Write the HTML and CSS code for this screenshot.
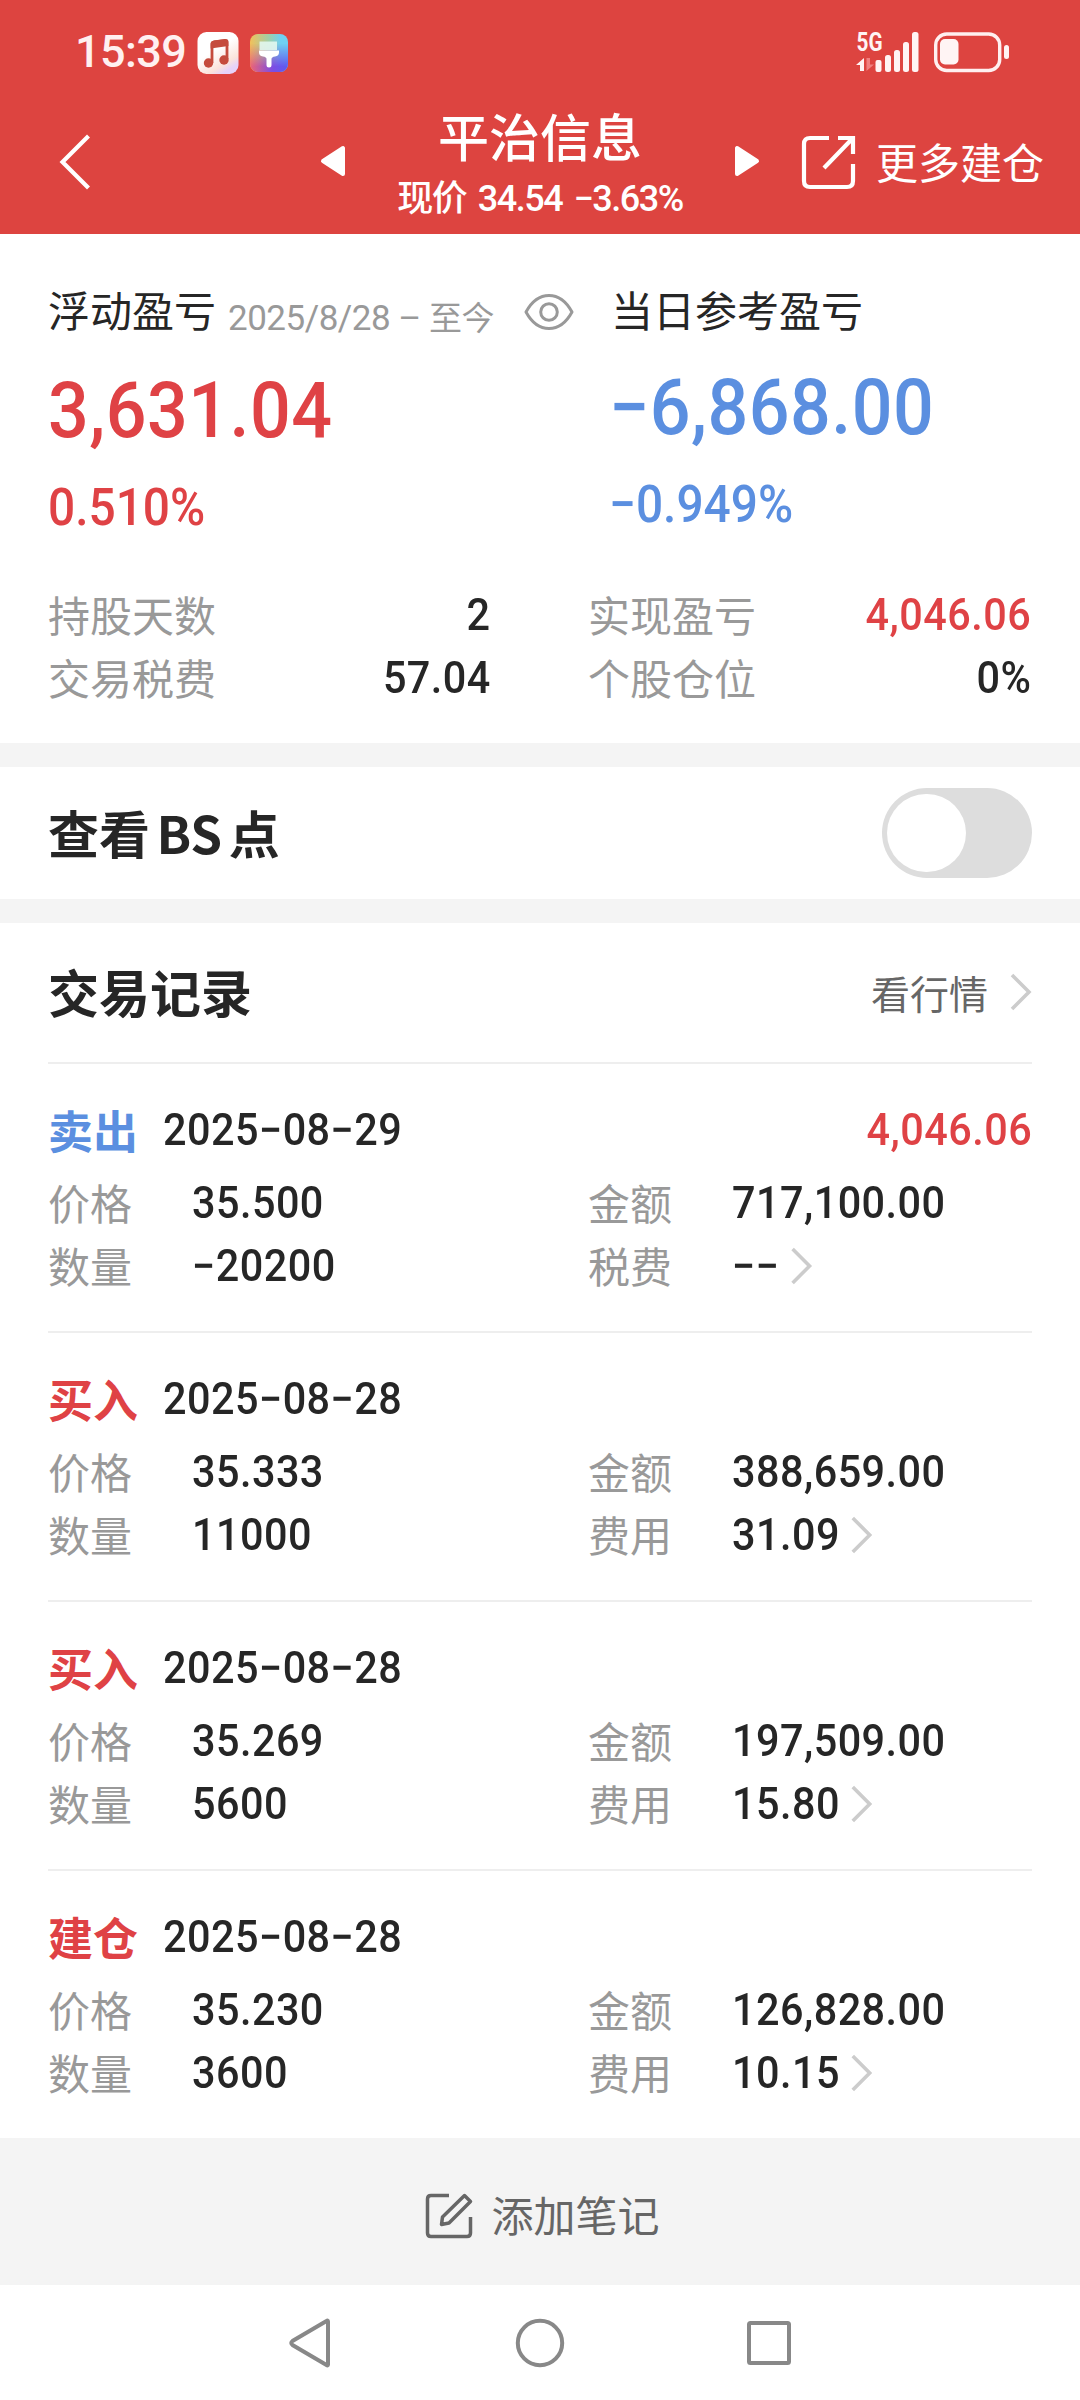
FILE: index.html
```html
<!DOCTYPE html>
<html lang="zh-CN">
<head>
<meta charset="utf-8">
<title>平治信息</title>
<link rel="stylesheet" href="styles.css">
</head>
<body>
<header class="header">
  <div class="status">
    <span class="clock">15:39</span>
    <svg class="app-music" width="42" height="42" viewBox="0 0 42 42">
      <defs><linearGradient id="mg" x1="0" y1="0" x2="0.6" y2="1"><stop offset="0.5" stop-color="#fff"/><stop offset="0.85" stop-color="#fbe3dc"/><stop offset="1" stop-color="#e6d2fa"/></linearGradient></defs>
      <rect x="0.5" width="41" height="42" rx="9" fill="url(#mg)"/>
      <path d="M15 31V12.500Q15 10.500 17 10L28 8.500Q30 8.500 30 10.500V27" fill="none" stroke="#c54b3d" stroke-width="2.800"/>
      <path d="M13.600 11.500Q13.600 9 17 8.500L28 7.200Q31.400 7 31.400 9.500V14L13.600 16.500Z" fill="#c54b3d"/>
      <circle cx="11.500" cy="31" r="4.700" fill="#c54b3d"/><circle cx="27" cy="28" r="4.700" fill="#c54b3d"/>
    </svg>
    <svg class="app-theme" width="38" height="38" viewBox="0 0 38 38">
      <defs>
        <linearGradient id="t1" x1="0" y1="0" x2="1" y2="0"><stop offset="0" stop-color="#f2c05a"/><stop offset="0.5" stop-color="#9fcfa8"/><stop offset="0.8" stop-color="#6fd0f2"/></linearGradient>
        <linearGradient id="t2" x1="0" y1="0" x2="1" y2="0"><stop offset="0" stop-color="#ee6474"/><stop offset="0.6" stop-color="#7c4de4"/><stop offset="1" stop-color="#5b5cf0"/></linearGradient>
        <linearGradient id="fade" x1="0" y1="0" x2="0" y2="1"><stop offset="0.25" stop-color="#000"/><stop offset="0.85" stop-color="#fff"/></linearGradient>
        <mask id="tm"><rect width="38" height="38" fill="url(#fade)"/></mask>
      </defs>
      <rect width="38" height="38" rx="8" fill="url(#t1)"/>
      <rect width="38" height="38" rx="8" fill="url(#t2)" mask="url(#tm)"/>
      <path d="M9.500 7.500H27V16H9.500Z" fill="#e2f7ef" opacity="0.9"/>
      <path d="M9 16.500H29V18.500Q29 22 25 22.500Q21.500 23 21.500 25V31Q21.500 33.500 19 33.500Q16.500 33.500 16.500 31V25Q16.500 23 13 22.500Q9 22 9 18.500Z" fill="#fff"/>
    </svg>
    <span class="spacer"></span>
    <svg class="signal" width="64" height="50" viewBox="0 -8 64 50">
      <text class="net" x="0.500" y="19" textLength="26" lengthAdjust="spacingAndGlyphs">5G</text>
      <path d="M8 26V39H4V33H0Z" fill="#fff4f4"/>
      <path d="M10.500 26V39L18 32.500H14V26Z" fill="#f08080"/>
      <g fill="#fff4f4"><rect x="19.500" y="28" width="6" height="12" rx="2"/><rect x="29" y="23" width="6" height="17" rx="2.500"/><rect x="38" y="18" width="6" height="22" rx="2.500"/><rect x="47" y="10" width="6" height="30" rx="2.500"/><rect x="56" y="0" width="6.500" height="40" rx="2.500"/></g>
    </svg>
    <svg class="battery" width="76" height="42" viewBox="0 0 76 42">
      <rect x="1.700" y="2" width="64" height="36.500" rx="11" fill="none" stroke="#fff0f0" stroke-width="3.400"/>
      <rect x="6" y="7" width="18.500" height="25.500" rx="5" fill="#fff4f4"/>
      <rect x="70" y="13" width="5" height="14" rx="2.500" fill="#fff4f4"/>
    </svg>
  </div>
  <nav class="nav">
    <svg class="back" width="34" height="60" viewBox="0 0 34 60"><path d="M30.500 4L4.500 30L30.500 56" fill="none" stroke="#fff" stroke-width="4.200"/></svg>
    <svg class="prev" width="26" height="32" viewBox="0 0 26 32"><path d="M23 3V29L3 16Z" fill="#fff" stroke="#fff" stroke-width="4" stroke-linejoin="round"/></svg>
    <div class="title">
      <h1>平治信息</h1>
      <p>现价 34.54 −3.63%</p>
    </div>
    <svg class="next" width="26" height="32" viewBox="0 0 26 32"><path d="M3 3V29L23 16Z" fill="#fff" stroke="#fff" stroke-width="4" stroke-linejoin="round"/></svg>
    <svg class="share" width="56" height="58" viewBox="0 0 56 58"><path d="M28 4H9Q3 4 3 10V47Q3 53 9 53H46Q52 53 52 47V30M37 4H52V20M51 5L23 34" fill="none" stroke="#fff" stroke-width="4.200"/></svg>
    <span class="more">更多建仓</span>
  </nav>
</header>

<main>
  <section class="summary">
    <div class="totals">
      <div class="total red">
        <div class="caption"><span class="name">浮动盈亏</span><span class="range">2025/8/28 – <i>至今</i></span>
          <svg class="eye" width="50" height="38" viewBox="0 0 50 38"><path d="M2 19Q11 2.500 25 2.500Q39 2.500 48 19Q39 35.500 25 35.500Q11 35.500 2 19Z" fill="none" stroke="#999" stroke-width="3" stroke-linejoin="round"/><circle cx="25" cy="19" r="8.300" fill="none" stroke="#999" stroke-width="3"/></svg>
        </div>
        <div class="big">3,631.04</div>
        <div class="pct">0.510%</div>
      </div>
      <div class="total blue">
        <div class="caption"><span class="name">当日参考盈亏</span></div>
        <div class="big">−6,868.00</div>
        <div class="pct">−0.949%</div>
      </div>
    </div>
    <dl class="stats">
      <div><dt>持股天数</dt><dd>2</dd></div>
      <div><dt>实现盈亏</dt><dd class="red">4,046.06</dd></div>
      <div><dt>交易税费</dt><dd>57.04</dd></div>
      <div><dt>个股仓位</dt><dd>0%</dd></div>
    </dl>
  </section>

  <section class="bs">
    <h2>查看 BS 点</h2>
    <span class="toggle"><span class="knob"></span></span>
  </section>

  <section class="records">
    <div class="records-head">
      <h2>交易记录</h2>
      <a class="quote">看行情<svg class="chev" width="22" height="38" viewBox="0 0 22 38"><path d="M2 2L19 19L2 36" /></svg></a>
    </div>

    <article class="record">
      <div class="top"><b class="blue">卖出</b><time>2025−08−29</time><span class="gain red">4,046.06</span></div>
      <dl class="grid">
        <dt>价格</dt><dd>35.500</dd><dt>金额</dt><dd>717,100.00</dd>
        <dt>数量</dt><dd>−20200</dd><dt>税费</dt><dd>−−<svg class="chev" width="22" height="38" viewBox="0 0 22 38"><path d="M2 2L19 19L2 36" /></svg></dd>
      </dl>
    </article>
    <article class="record">
      <div class="top"><b class="red">买入</b><time>2025−08−28</time></div>
      <dl class="grid">
        <dt>价格</dt><dd>35.333</dd><dt>金额</dt><dd>388,659.00</dd>
        <dt>数量</dt><dd>11000</dd><dt>费用</dt><dd>31.09<svg class="chev" width="22" height="38" viewBox="0 0 22 38"><path d="M2 2L19 19L2 36" /></svg></dd>
      </dl>
    </article>
    <article class="record">
      <div class="top"><b class="red">买入</b><time>2025−08−28</time></div>
      <dl class="grid">
        <dt>价格</dt><dd>35.269</dd><dt>金额</dt><dd>197,509.00</dd>
        <dt>数量</dt><dd>5600</dd><dt>费用</dt><dd>15.80<svg class="chev" width="22" height="38" viewBox="0 0 22 38"><path d="M2 2L19 19L2 36" /></svg></dd>
      </dl>
    </article>
    <article class="record">
      <div class="top"><b class="red">建仓</b><time>2025−08−28</time></div>
      <dl class="grid">
        <dt>价格</dt><dd>35.230</dd><dt>金额</dt><dd>126,828.00</dd>
        <dt>数量</dt><dd>3600</dd><dt>费用</dt><dd>10.15<svg class="chev" width="22" height="38" viewBox="0 0 22 38"><path d="M2 2L19 19L2 36" /></svg></dd>
      </dl>
    </article>
  </section>
</main>

<div class="note">
  <svg width="48" height="48" viewBox="0 0 48 48"><path d="M24 3.500H6Q2.500 3.500 2.500 7V41Q2.500 44.500 6 44.500H42Q45.500 44.500 45.500 41V25M39.500 3.500L45.500 9.500L24 31L16.500 32.500L17.500 25Z" fill="none" stroke="#666" stroke-width="3.500" stroke-linejoin="round"/></svg>
  <span>添加笔记</span>
</div>

<footer class="sysnav">
  <svg width="46" height="52" viewBox="0 0 46 52"><path d="M41 4.500V47.500Q41 49 39.500 48L5.500 28Q3 26 5.500 24L39.500 4Q41 3 41 4.500Z"/></svg>
  <svg width="52" height="52" viewBox="0 0 52 52"><circle cx="26" cy="26" r="22.200"/></svg>
  <svg width="46" height="52" viewBox="0 0 46 52"><rect x="2" y="6" width="40" height="40" rx="1.500"/></svg>
</footer>
</body>
</html>
```
FILE: styles.css
```css
* { box-sizing: border-box; margin: 0; padding: 0; }
body {
  width: 1080px;
  height: 2400px;
  display: flex;
  flex-direction: column;
  background: #fff;
  color: #262626;
  font-family: Roboto, "Noto Sans CJK SC", sans-serif;
  overflow: hidden;
}
svg { display: block; flex: none; }
.red { color: #df4245; }
.blue { color: #5b8fe0; }

.header { height: 234px; background: #dd4440; color: #fff; }
.status { height: 100px; display: flex; align-items: flex-start; padding: 32px 70px 0 75px; }
.clock { width: 122px; font-size: 45px; font-weight: 500; line-height: 39px; letter-spacing: -0.6px; color: #fff0f0; }
.app-theme { margin: 2px 0 0 11px; }
.spacer { flex: 1; }
.signal { margin-top: -8px; }
.net { font: 700 26px Roboto, sans-serif; fill: #fff4f4; }
.battery { margin-left: 14px; }

.nav {
  height: 134px;
  display: grid;
  grid-template-columns: 262px 26px 388px 26px 41px 75px 170px;
  align-items: start;
  padding: 0 32px 0 58px;
}
.back { margin-top: 32px; }
.prev, .next { margin-top: 45px; }
.title { text-align: center; }
.title h1 { font: 500 51px/60px "Noto Sans CJK SC", sans-serif; margin-top: 5px; }
.title p { font-size: 36px; line-height: 44px; font-weight: 500; margin-top: 12px; letter-spacing: -1.5px; word-spacing: 4px; }
.share { grid-column: 6; margin-top: 34px; }
.more { font: 400 42px/60px "Noto Sans CJK SC", sans-serif; margin-top: 31px; }

.summary { height: 509px; padding: 45px 48px 0; }
.totals { display: grid; grid-template-columns: 563px 1fr; }
.caption { display: flex; height: 64px; }
.name { font: 400 42px/60px "Noto Sans CJK SC", sans-serif; white-space: nowrap; color: #262626; }
.range { margin-left: 12px; font-size: 35px; line-height: 80px; letter-spacing: -0.5px; color: #999; white-space: nowrap; }
.range i { font-style: normal; font-size: 33px; }
.eye { margin: 14px 0 0 auto; }
.total.red .caption { width: 526px; }
.big, .pct { width: max-content; transform: scaleX(0.92); transform-origin: left; white-space: nowrap; font-weight: 500; }
.big { font-size: 78px; line-height: 90px; letter-spacing: 0.5px; margin-top: 23px; }
.pct { font-size: 52px; line-height: 60px; letter-spacing: 0; margin-top: 22px; }
.total.blue .big { margin: 20px 0 0 -2px; }
.total.blue .pct { margin-left: -2px; }
.stats { display: grid; grid-template-columns: 443px 443px; column-gap: 97px; margin-top: 44px; }
.stats div { display: flex; justify-content: space-between; height: 63px; }
dt { font: 400 42px/63px "Noto Sans CJK SC", sans-serif; color: #999; }
dd { font-size: 44px; line-height: 66px; font-weight: 500; }
dd, time, .gain { letter-spacing: 0.5px; transform: scaleX(0.94); transform-origin: left; }
.stats dd, .gain { transform-origin: right; }

.bs {
  height: 180px;
  display: flex;
  justify-content: space-between;
  align-items: center;
  padding: 0 48px;
  border-top: 24px solid #f4f4f4;
  border-bottom: 24px solid #f4f4f4;
}
h2 { font: 700 51px/70px "Noto Sans CJK SC", sans-serif; word-spacing: -5px; margin-bottom: 3px; }
.toggle { width: 150px; height: 90px; border-radius: 45px; background: #ddd; padding: 6px 5px; }
.knob { display: block; width: 79px; height: 78px; border-radius: 40px; background: #fff; }

.records { padding: 0 48px; }
.records-head { height: 139px; display: flex; justify-content: space-between; align-items: center; }
.quote { display: flex; align-items: center; font: 400 39px/60px "Noto Sans CJK SC", sans-serif; color: #666; margin-bottom: 2px; }
.chev { fill: none; stroke: #ccc; stroke-width: 3.6; }
.quote .chev { margin-left: 22px; }
.record { height: 269px; border-top: 2px solid #eee; padding-top: 34px; }
.top { display: flex; height: 72px; line-height: 64px; font-size: 44px; font-weight: 500; }
.top b { width: 115px; font: 700 45px/63px "Noto Sans CJK SC", sans-serif; }
.gain { margin-left: auto; }
.grid { display: grid; grid-template-columns: 144px 396px 144px 1fr; grid-auto-rows: 63px; }
.grid dd { display: flex; align-items: center; height: 66px; }
.grid .chev { margin-left: 12px; transform: scaleX(1.06); }

.note { height: 147px; display: flex; justify-content: center; align-items: center; gap: 18px; padding: 8px 0 0 5px; background: #f4f4f4; color: #666; font: 400 42px/60px "Noto Sans CJK SC", sans-serif; }
.note span { margin-top: -4px; }
.sysnav { flex: 1; display: flex; justify-content: center; gap: 181px; padding-top: 32px; }
.sysnav svg { fill: none; stroke: #888; stroke-width: 4; }
```
